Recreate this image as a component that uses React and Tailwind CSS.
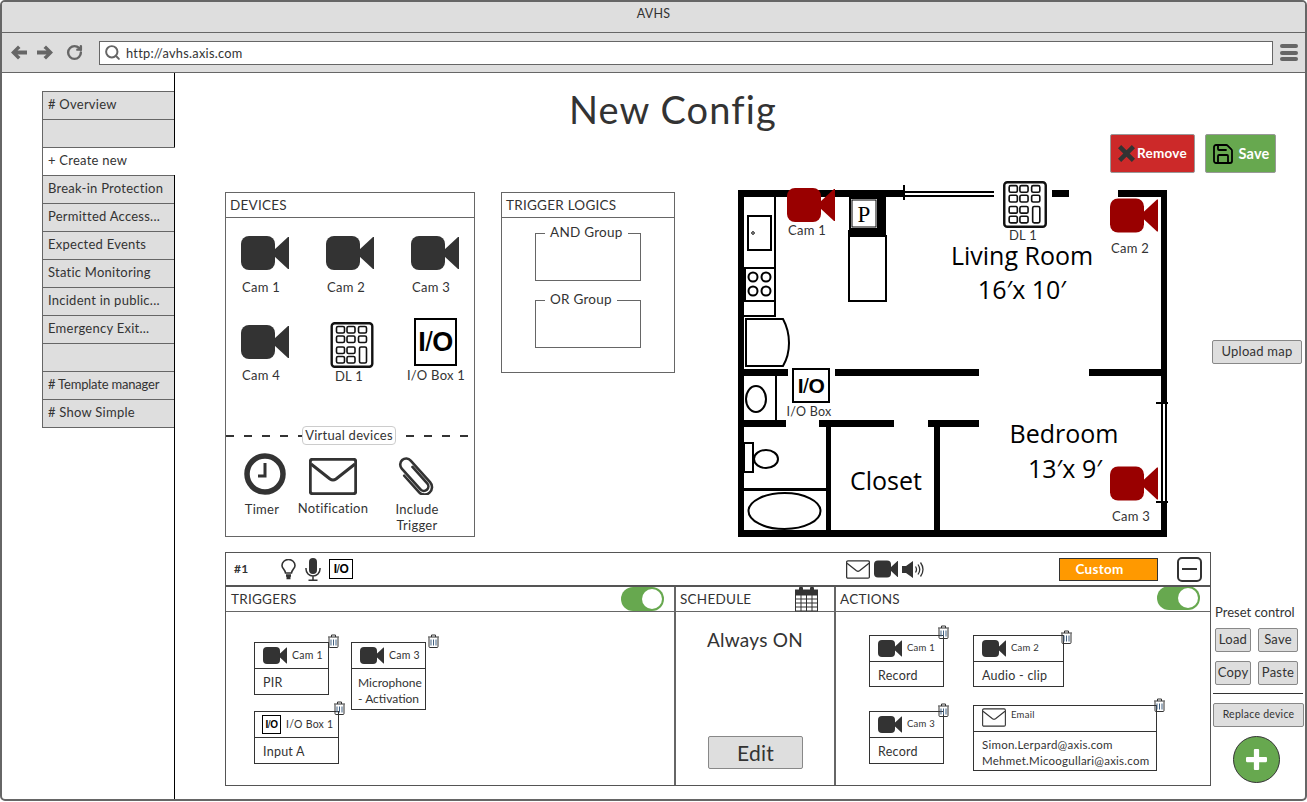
import { Save, RotateCw, Search } from "lucide-react";

function CamIcon({ className = "w-[48px] h-[34px]", color = "#333333" }) {
  return (
    <svg viewBox="0 0 48 34" className={className} fill={color}>
      <rect x="0" y="0" width="34" height="34" rx="8" />
      <polygon points="33,14 47,1 48,1 48,33 47,33 33,20" />
    </svg>
  );
}

function Keypad({ className = "w-[44px] h-[46px]" }) {
  const cells = [
    [6, 4.5], [16.5, 4.5], [28, 4.5],
    [6, 14], [16.5, 14], [28, 14],
    [6, 25], [16.5, 25],
    [6, 34.5], [16.5, 34.5],
  ];
  return (
    <svg viewBox="0 0 43 46" className={className} fill="none" stroke="#111111">
      <rect x="1.2" y="1.2" width="40.6" height="43.6" rx="3" strokeWidth="2.4" fill="#ffffff" />
      {cells.map(([x, y], i) => (
        <rect key={i} x={x} y={y} width="8" height="6.5" rx="1.5" strokeWidth="1.6" />
      ))}
      <rect x="29" y="25" width="7" height="16" rx="1.5" strokeWidth="1.6" />
    </svg>
  );
}

function IoBox({ className = "w-[43px] h-[48px] border-2 text-[27px]" }) {
  return (
    <div className={`flex items-center justify-center bg-white border-black text-black font-['Liberation_Sans',sans-serif] tracking-[-0.5px] ${className}`}>
      <span className="font-bold">I</span>
      <span className="font-normal">/</span>
      <span className="font-bold">O</span>
    </div>
  );
}

function Envelope({ className = "w-[48px] h-[37px]", sw = 2.5 }) {
  return (
    <svg viewBox="0 0 48 37" className={className} fill="none" stroke="#333333" strokeWidth={sw} strokeLinejoin="round">
      <rect x="1.25" y="1.25" width="45.5" height="34.5" rx="2.5" />
      <path d="M2 6 L21 21 Q24 23 27 21 L46 6" />
    </svg>
  );
}

function Trash({ className = "" }) {
  return (
    <svg viewBox="0 0 12 14" className={`w-[13px] h-[14px] ${className}`} fill="none" stroke="#333333" strokeWidth="1">
      <path d="M0.5 3 H11.5 M4 3 V1 H8 V3" />
      <path d="M1.5 3.5 V12.5 Q1.5 13.5 2.5 13.5 H9.5 Q10.5 13.5 10.5 12.5 V3.5" />
      <path d="M3.5 5.5 V11.5 M6 5.5 V11.5 M8.5 5.5 V11.5" stroke="#3f5f80" />
    </svg>
  );
}

function Toggle({ className = "" }) {
  return (
    <div className={`w-[43px] h-[24px] rounded-full bg-[#67a84f] flex items-center justify-end pr-[2px] ${className}`}>
      <div className="w-[20px] h-[20px] rounded-full bg-white" />
    </div>
  );
}

// device card used in the trigger and action lists
function RuleCard({ icon, name, width, height, trash, nameSize = "text-[10.5px]", children }) {
  return (
    <div className={`relative border border-[#333] bg-white shrink-0 ${width} ${height}`}>
      <div className="flex items-center gap-[3px] pl-[8px] border-b border-[#333] h-[26px]">
        {icon}
        <span className={`${nameSize} whitespace-nowrap ml-[2px]`}>{name}</span>
      </div>
      <div className="px-[8px] text-[12.5px] leading-[16px] pt-[6px]">{children}</div>
      <Trash className={`absolute ${trash}`} />
    </div>
  );
}

const smallCam = <CamIcon className="w-[24px] h-[17px] shrink-0" />;

function PanelHeader({ children }) {
  return (
    <div className="h-[25px] border-b border-[#666] pl-[4px] pt-[1px] flex items-center text-[13.5px]">{children}</div>
  );
}

function GroupBox({ label }) {
  return (
    <div className="relative w-[106px] h-[48px] border border-[#666]">
      <span className="absolute -top-[11px] left-[9px] px-[5px] bg-white text-[13.5px] leading-[18px] whitespace-nowrap">{label}</span>
    </div>
  );
}

function DeviceCell({ icon, label, top = "", shift = "pr-[8px]" }) {
  return (
    <div className="w-[85px] shrink-0">
      <div className={`w-[48px] ${top}`}>{icon}</div>
      <div className={`w-[48px] text-center text-[13px] leading-[16px] whitespace-nowrap flex justify-center ${shift}`}>{label}</div>
    </div>
  );
}

function GrayButton({ className = "", children }) {
  return (
    <div className={`flex items-center justify-center bg-[#dedede] border border-[#888] rounded-[2px] whitespace-nowrap ${className}`}>
      {children}
    </div>
  );
}

function FloorPlan() {
  return (
    <svg viewBox="738 180 430 358" className="absolute inset-0 w-[430px] h-[358px]" fill="#000000">
      {/* outer walls */}
      <rect x="738" y="190" width="166" height="7" />
      <rect x="1052" y="190" width="17" height="7" />
      <rect x="1118" y="190" width="49" height="7" />
      <rect x="738" y="190" width="6" height="347" />
      <rect x="738" y="530" width="429" height="7" />
      <rect x="1161" y="190" width="6" height="213" />
      <rect x="1161" y="502" width="6" height="35" />
      {/* windows */}
      <rect x="903" y="185" width="2" height="15" />
      <rect x="904" y="191" width="90" height="2" />
      <rect x="904" y="195" width="90" height="2" />
      <rect x="1161" y="403" width="2" height="99" />
      <rect x="1165" y="403" width="2" height="99" />
      <rect x="1156" y="402" width="14" height="2" />
      <rect x="1156" y="501" width="14" height="2" />
      {/* inner walls */}
      <rect x="738" y="369" width="50" height="7" />
      <rect x="835" y="369" width="144" height="7" />
      <rect x="1089" y="369" width="78" height="7" />
      <rect x="738" y="420" width="48" height="7" />
      <rect x="819" y="420" width="75" height="7" />
      <rect x="928" y="420" width="51" height="7" />
      <rect x="826" y="427" width="5" height="110" />
      <rect x="934" y="427" width="6" height="110" />
      <rect x="878" y="197" width="8" height="39" />
      <rect x="848" y="230" width="38" height="6" />
      {/* kitchen */}
      <g fill="none" stroke="#000000" strokeWidth="2">
        <path d="M775 197 V316 H744" />
        <rect x="748" y="216" width="23" height="34" />
        <rect x="745" y="268" width="30" height="33" />
        <circle cx="753" cy="277" r="4.5" />
        <circle cx="766" cy="277" r="4.5" />
        <circle cx="753" cy="291" r="4.5" />
        <circle cx="766" cy="291" r="4.5" />
        <rect x="850" y="198" width="28" height="31" />
        <rect x="852" y="200" width="24" height="27" strokeWidth="1" />
        <rect x="849" y="236" width="37" height="65" />
        <path d="M746 319 H783 Q789 330 789 343 Q789 356 783 366 H746 Z" />
        <circle cx="753" cy="233" r="1.3" strokeWidth="1" />
        {/* bathroom */}
        <path d="M776 376 V420" />
        <ellipse cx="756" cy="399" rx="10" ry="13" />
        <rect x="744" y="443" width="9" height="29" />
        <ellipse cx="766" cy="459" rx="12" ry="9" />
        <path d="M744 489.5 H826" strokeWidth="3" />
        <ellipse cx="784.5" cy="511" rx="36" ry="18" />
      </g>
    </svg>
  );
}

function PlanLabel({ className, children }) {
  return <span className={`absolute -translate-x-1/2 -translate-y-1/2 whitespace-nowrap ${className}`}>{children}</span>;
}

export default function App() {
  return (
    <div className="w-[1307px] h-[801px] border-2 border-[#666] rounded-[5px] bg-white flex flex-col overflow-hidden text-[#333] font-['Lato',sans-serif] tracking-[0.25px]">
      {/* browser chrome */}
      <div className="h-[31px] shrink-0 bg-[#dedede] border-b border-[#666] flex justify-center pt-[3px] text-[12.5px] leading-[16px]">
        <span className="mt-[1px]">AVHS</span>
      </div>
      <div className="h-[40px] shrink-0 bg-[#dedede] border-b border-[#666] flex items-center">
        <svg viewBox="0 0 16 15" className="w-[16px] h-[15px] ml-[9px]" fill="#666666">
          <polygon points="0,7.5 7,0.5 9.5,3 6.5,5.5 16,5.5 16,9.5 6.5,9.5 9.5,12 7,14.5" />
        </svg>
        <svg viewBox="0 0 16 15" className="w-[16px] h-[15px] ml-[10px] -scale-x-100" fill="#666666">
          <polygon points="0,7.5 7,0.5 9.5,3 6.5,5.5 16,5.5 16,9.5 6.5,9.5 9.5,12 7,14.5" />
        </svg>
        <RotateCw className="w-[17px] h-[17px] ml-[13px] text-[#666]" strokeWidth={3.4} />
        <div className="w-[1174px] h-[24px] ml-[16px] bg-white border border-[#666] flex items-center">
          <Search className="w-[17px] h-[17px] ml-[4px] text-[#666]" strokeWidth={2.8} />
          <span className="ml-[5px] mt-[2px] text-[12.8px]">http://avhs.axis.com</span>
        </div>
        <div className="ml-[7px] w-[18px] flex flex-col gap-[2.5px]">
          <div className="h-[4px] rounded-full bg-[#666]" />
          <div className="h-[4px] rounded-full bg-[#666]" />
          <div className="h-[4px] rounded-full bg-[#666]" />
        </div>
      </div>

      <div className="flex flex-1 min-h-0">
        {/* side menu */}
        <div className="w-[173px] shrink-0 border-r border-black pl-[40px] pt-[18px] text-[13px]">
          {["# Overview", "", "+ Create new", "Break-in Protection", "Permitted Access...", "Expected Events", "Static Monitoring", "Incident in public...", "Emergency Exit...", "", "# Template manager", "# Show Simple"].map((item, i) => (
            <div
              key={i}
              className={
                item === "+ Create new"
                  ? "h-[28px] -mr-px bg-white border-l border-t border-[#666] flex items-center pl-[5px] pb-[2px] whitespace-nowrap"
                  : `h-[28px] bg-[#dedede] border-l border-t border-[#666] flex items-center pl-[5px] pb-[2px] whitespace-nowrap ${i === 11 ? "border-b h-[29px]" : ""} ${i === 10 ? "tracking-[-0.2px]" : ""}`
              }
            >
              {item}
            </div>
          ))}
        </div>

        <div className="flex-1 min-w-0">
          <div className="pl-[394px] pt-[14px] h-[61px]">
            <div className="text-[38px] leading-[44px] whitespace-nowrap tracking-[1.1px]">New Config</div>
          </div>
          <div className="flex justify-end gap-[10px] pr-[29px] h-[39px]">
            <div className="w-[85px] bg-[#cc2929] border border-[#999] rounded-[2px] flex items-center justify-center gap-[2px] text-white font-bold text-[13.5px]">
              <svg viewBox="0 0 16 16" className="w-[17px] h-[17px]" fill="#333333">
                <polygon points="0,3 3,0 8,5 13,0 16,3 11,8 16,13 13,16 8,11 3,16 0,13 5,8" />
              </svg>
              Remove
            </div>
            <div className="w-[71px] bg-[#67a84f] border border-[#999] rounded-[2px] flex items-center justify-center gap-[3px] text-white font-bold text-[14.5px]">
              <Save className="w-[24px] h-[24px] text-black" strokeWidth={1.8} />
              Save
            </div>
          </div>

          <div className="flex items-start mt-[7px] h-[358px]">
            {/* devices */}
            <div className="w-[250px] h-[345px] mt-[12px] ml-[50px] border border-[#666] shrink-0">
              <PanelHeader>DEVICES</PanelHeader>
              <div className="pl-[15px] pt-[18px] flex">
                <DeviceCell icon={<CamIcon />} label={<span className="mt-[9px]">Cam 1</span>} />
                <DeviceCell icon={<CamIcon />} label={<span className="mt-[9px]">Cam 2</span>} />
                <DeviceCell icon={<CamIcon />} label={<span className="mt-[9px]">Cam 3</span>} />
              </div>
              <div className="pl-[15px] mt-[23px] flex">
                <DeviceCell icon={<CamIcon />} label={<span className="mt-[8px]">Cam 4</span>} top="pt-[7px]" />
                <DeviceCell icon={<Keypad />} label="DL 1" top="ml-[4px] pt-[4px]" shift="pr-[2px]" />
                <DeviceCell icon={<IoBox />} label="I/O Box 1" top="ml-[3px] pb-[1px]" shift="pl-[2px]" />
              </div>
              <div className="relative mt-[51px] mr-[6px] h-[2px] bg-[repeating-linear-gradient(90deg,#333_0_8px,transparent_8px_18px)]">
                <div className="absolute left-[76px] -top-[9px] w-[94px] h-[19px] bg-white border border-[#ccc] rounded-[4px] flex items-center justify-center text-[13px] whitespace-nowrap">
                  Virtual devices
                </div>
              </div>
              <div className="flex pl-[10px] mt-[16px] text-[13px] leading-[16px]">
                <div className="w-[58px] flex flex-col items-center">
                  <svg viewBox="0 0 42 42" className="w-[42px] h-[42px]" fill="none" stroke="#333333">
                    <circle cx="21" cy="21" r="18" strokeWidth="5.5" />
                    <path d="M21 10 V23 H14" strokeWidth="3" />
                  </svg>
                  <span className="mt-[6px] pr-[6px]">Timer</span>
                </div>
                <div className="w-[78px] flex flex-col items-center pt-[5px]">
                  <Envelope sw={3} />
                  <span className="mt-[5px]">Notification</span>
                </div>
                <div className="w-[90px] flex flex-col items-center pt-[2px]">
                  <svg viewBox="0 0 40 40" className="w-[40px] h-[40px]" fill="none" stroke="#333333" strokeWidth="2.6" strokeLinecap="round">
                    <g transform="rotate(-42 20 20)">
                      <path d="M22 11 V33 A4.5 4.5 0 0 1 13 33 V5 A6 6 0 0 1 25 5 V34 A7.5 7.5 0 0 1 10 34 V12" />
                    </g>
                  </svg>
                  <span className="mt-[6px] text-center">Include<br />Trigger</span>
                </div>
              </div>
            </div>

            {/* trigger logics */}
            <div className="w-[174px] h-[181px] mt-[12px] ml-[26px] border border-[#666] shrink-0">
              <PanelHeader>TRIGGER LOGICS</PanelHeader>
              <div className="pl-[33px] pt-[15px] flex flex-col gap-[19px]">
                <GroupBox label="AND Group" />
                <GroupBox label="OR Group" />
              </div>
            </div>

            {/* floor plan */}
            <div className="relative w-[430px] h-[358px] ml-[63px] shrink-0 text-[13px]">
              <FloorPlan />
              <PlanLabel className="left-[284px] top-[75px] font-['Open_Sans',sans-serif] leading-[20px] text-[25px] text-black tracking-normal">Living Room</PlanLabel>
              <PlanLabel className="left-[284px] top-[109px] font-['Open_Sans',sans-serif] leading-none text-[25px] text-black tracking-normal">16′x 10′</PlanLabel>
              <PlanLabel className="left-[326px] top-[253px] font-['Open_Sans',sans-serif] leading-none text-[25px] text-black tracking-normal">Bedroom</PlanLabel>
              <PlanLabel className="left-[327px] top-[288px] font-['Open_Sans',sans-serif] leading-none text-[25px] text-black tracking-normal">13′x 9′</PlanLabel>
              <PlanLabel className="left-[148px] top-[300px] font-['Open_Sans',sans-serif] leading-none text-[25px] text-black tracking-normal">Closet</PlanLabel>
              <PlanLabel className="left-[126px] top-[34px] font-['Liberation_Serif',serif] leading-none text-[23px] text-black">P</PlanLabel>
              <CamIcon className="absolute left-[49px] top-[8px] w-[48px] h-[34px]" color="#990000" />
              <CamIcon className="absolute left-[372px] top-[18px] w-[48px] h-[35px]" color="#990000" />
              <CamIcon className="absolute left-[372px] top-[286px] w-[48px] h-[35px]" color="#990000" />
              <PlanLabel className="left-[69px] top-[51px]">Cam 1</PlanLabel>
              <PlanLabel className="left-[392px] top-[69px]">Cam 2</PlanLabel>
              <PlanLabel className="left-[393px] top-[337px]">Cam 3</PlanLabel>
              <Keypad className="absolute left-[265px] top-[1px] w-[44px] h-[47px]" />
              <PlanLabel className="left-[285px] top-[55px] leading-[12px]">DL 1</PlanLabel>
              <IoBox className="absolute left-[54px] top-[188px] w-[38px] h-[35px] border-2 text-[21px]" />
              <PlanLabel className="left-[71px] top-[232px] text-[12.5px]">I/O Box</PlanLabel>
            </div>

            <GrayButton className="w-[90px] h-[24px] ml-[44px] mt-[160px] text-[13px] shrink-0">Upload map</GrayButton>
          </div>

          <div className="flex items-start mt-[14px]">
            {/* rule editor */}
            <div className="w-[986px] h-[234px] ml-[50px] border border-[#555] shrink-0 flex flex-col">
              <div className="h-[34px] shrink-0 border-b-2 border-[#555] flex items-center text-[12px] relative">
                <span className="ml-[8px] w-[47px] font-bold">#1</span>
                <svg viewBox="0 0 15 21" className="w-[15px] h-[21px]" fill="none" stroke="#333333" strokeWidth="1.6">
                  <path d="M4.5 14 C4 10.5 1 9.5 1 6.5 A6.5 6 0 0 1 14 6.5 C14 9.5 11 10.5 10.5 14 Z" />
                  <path d="M5 16.5 H10 M5.5 19 H9.5" strokeWidth="2.4" />
                </svg>
                <svg viewBox="0 0 16 23" className="w-[16px] h-[23px] ml-[9px]" fill="none" stroke="#333333" strokeWidth="1.5">
                  <rect x="4" y="0" width="8" height="16" rx="4" fill="#333333" stroke="none" />
                  <path d="M1 10 V11 A7 7 0 0 0 15 11 V10 M8 18 V22 M3.5 22.3 H12.5" />
                </svg>
                <IoBox className="w-[24px] h-[20px] ml-[8px] border text-[12px]" />
                <Envelope className="w-[24px] h-[19px] ml-[493px]" sw={2.6} />
                <CamIcon className="w-[24px] h-[18px] ml-[4px]" />
                <svg viewBox="0 0 24 19" className="w-[24px] h-[19px] ml-[4px]" fill="none" stroke="#333333" strokeWidth="1.3">
                  <path d="M0 6 H4 L11 1 V18 L4 13 H0 Z" fill="#333333" stroke="none" />
                  <path d="M13.5 6.5 Q15.5 9.5 13.5 12.5 M16 4.5 Q19.5 9.5 16 14.5 M18.5 2.5 Q23.5 9.5 18.5 16.5" />
                </svg>
                <div className="w-[99px] h-[23px] ml-[133px] bg-[#ff9900] border border-[#333] flex items-center justify-center pr-[18px] text-white font-bold text-[13.5px]">Custom</div>
                <div className="w-[25px] h-[25px] ml-[19px] border-2 border-[#333] rounded-[5px] flex items-center justify-center">
                  <div className="w-[15px] h-[2px] bg-[#333]" />
                </div>
              </div>
              <div className="flex flex-1 min-h-0">
                {/* triggers */}
                <div className="w-[450px] shrink-0 border-r-2 border-[#666]">
                  <div className="h-[25px] border-b border-[#666] pl-[5px] flex items-center justify-between pr-[10px] text-[13.5px]">
                    TRIGGERS
                    <Toggle />
                  </div>
                  <div className="flex gap-[12px] pl-[28px] pt-[30px] text-[#333]">
                    <div className="flex flex-col gap-[16px]">
                      <RuleCard icon={smallCam} name="Cam 1" width="w-[75px]" height="h-[53px]" trash="-right-[12px] -top-[9px]">PIR</RuleCard>
                      <RuleCard icon={<IoBox className="w-[19px] h-[19px] border text-[10px] shrink-0 -ml-[1px]" />} name="I/O Box 1" width="w-[85px]" height="h-[53px]" trash="-right-[8px] -top-[11px]">Input A</RuleCard>
                    </div>
                    <RuleCard icon={smallCam} name="Cam 3" width="w-[75px]" height="h-[68px]" trash="-right-[15px] -top-[9px]">
                      <span className="whitespace-nowrap -ml-[2px] block text-[12px] tracking-normal">Microphone</span>
                      <span className="whitespace-nowrap -ml-[2px] block text-[12px] tracking-normal">- Activation</span>
                    </RuleCard>
                  </div>
                </div>

                {/* schedule */}
                <div className="w-[160px] shrink-0 border-r-2 border-[#666] flex flex-col">
                  <div className="h-[25px] border-b border-[#666] pl-[4px] pr-[16px] flex items-center justify-between text-[13.5px]">
                    SCHEDULE
                    <svg viewBox="0 0 23 25" className="w-[23px] h-[25px]" fill="none" stroke="#333333" strokeWidth="1">
                      <rect x="0.5" y="4" width="22" height="20" />
                      <rect x="0.5" y="3" width="22" height="5" fill="#333333" />
                      <rect x="4" y="0" width="4" height="6" rx="1" fill="#333333" stroke="none" />
                      <rect x="15" y="0" width="4" height="6" rx="1" fill="#333333" stroke="none" />
                      <path d="M6 8 V24 M11.5 8 V24 M17 8 V24 M0.5 12 H22.5 M0.5 16 H22.5 M0.5 20 H22.5" />
                    </svg>
                  </div>
                  <div className="text-center text-[19px] leading-[24px] pt-[16px]">Always ON</div>
                  <GrayButton className="w-[95px] h-[33px] ml-[32px] mt-[84px] text-[21px]">Edit</GrayButton>
                </div>

                {/* actions */}
                <div className="flex-1">
                  <div className="h-[25px] border-b border-[#666] pl-[4px] pr-[10px] flex items-center justify-between text-[13.5px]">
                    ACTIONS
                    <Toggle className="-mt-[2px]" />
                  </div>
                  <div className="flex gap-[29px] pl-[33px] pt-[23px]">
                    <div className="flex flex-col gap-[24px]">
                      <RuleCard icon={smallCam} name="Cam 1" nameSize="text-[9.5px]" width="w-[75px]" height="h-[52px]" trash="-right-[7px] -top-[11px]">Record</RuleCard>
                      <RuleCard icon={smallCam} name="Cam 3" nameSize="text-[9.5px]" width="w-[75px]" height="h-[53px]" trash="-right-[7px] -top-[9px]">Record</RuleCard>
                    </div>
                    <div className="flex flex-col gap-[18px]">
                      <RuleCard icon={smallCam} name="Cam 2" nameSize="text-[9.5px]" width="w-[91px]" height="h-[52px]" trash="-right-[10px] -top-[6px]">Audio - clip</RuleCard>
                      <RuleCard icon={<Envelope className="w-[24px] h-[21px] shrink-0 -mt-[2px]" sw={2.2} />} name="Email" nameSize="text-[9.5px] -mt-[6px]" width="w-[184px]" height="h-[66px]" trash="-right-[10px] -top-[8px]">
                        <div className="text-[11.5px] -mt-[1px]">Simon.Lerpard@axis.com</div>
                        <div className="text-[11.5px]">Mehmet.Micoogullari@axis.com</div>
                      </RuleCard>
                    </div>
                  </div>
                </div>
              </div>
            </div>

            {/* preset column */}
            <div className="w-[92px] ml-[2px] shrink-0 pt-[52px] text-[13px]">
              <div className="pl-[2px] leading-[16px] whitespace-nowrap tracking-normal">Preset control</div>
              <div className="flex gap-[7px] pl-[2px] mt-[8px]">
                <GrayButton className="w-[36px] h-[24px]">Load</GrayButton>
                <GrayButton className="w-[40px] h-[24px]">Save</GrayButton>
              </div>
              <div className="flex gap-[7px] pl-[2px] mt-[9px]">
                <GrayButton className="w-[36px] h-[24px]">Copy</GrayButton>
                <GrayButton className="w-[40px] h-[24px]">Paste</GrayButton>
              </div>
              <div className="h-px bg-[#333] mt-[8px] mr-[2px]" />
              <GrayButton className="w-[91px] h-[24px] mt-[9px] text-[10.5px]">Replace device</GrayButton>
              <div className="w-[47px] h-[47px] ml-[20px] mt-[9px] rounded-full bg-[#67a84f] border border-[#333] flex items-center justify-center">
                <svg viewBox="0 0 20 20" className="w-[21px] h-[21px]" fill="#ffffff">
                  <path d="M7.5 1 Q7.5 0 8.5 0 H11.5 Q12.5 0 12.5 1 V7.5 H19 Q20 7.5 20 8.5 V11.5 Q20 12.5 19 12.5 H12.5 V19 Q12.5 20 11.5 20 H8.5 Q7.5 20 7.5 19 V12.5 H1 Q0 12.5 0 11.5 V8.5 Q0 7.5 1 7.5 H7.5 Z" />
                </svg>
              </div>
            </div>
          </div>
        </div>
      </div>
    </div>
  );
}
